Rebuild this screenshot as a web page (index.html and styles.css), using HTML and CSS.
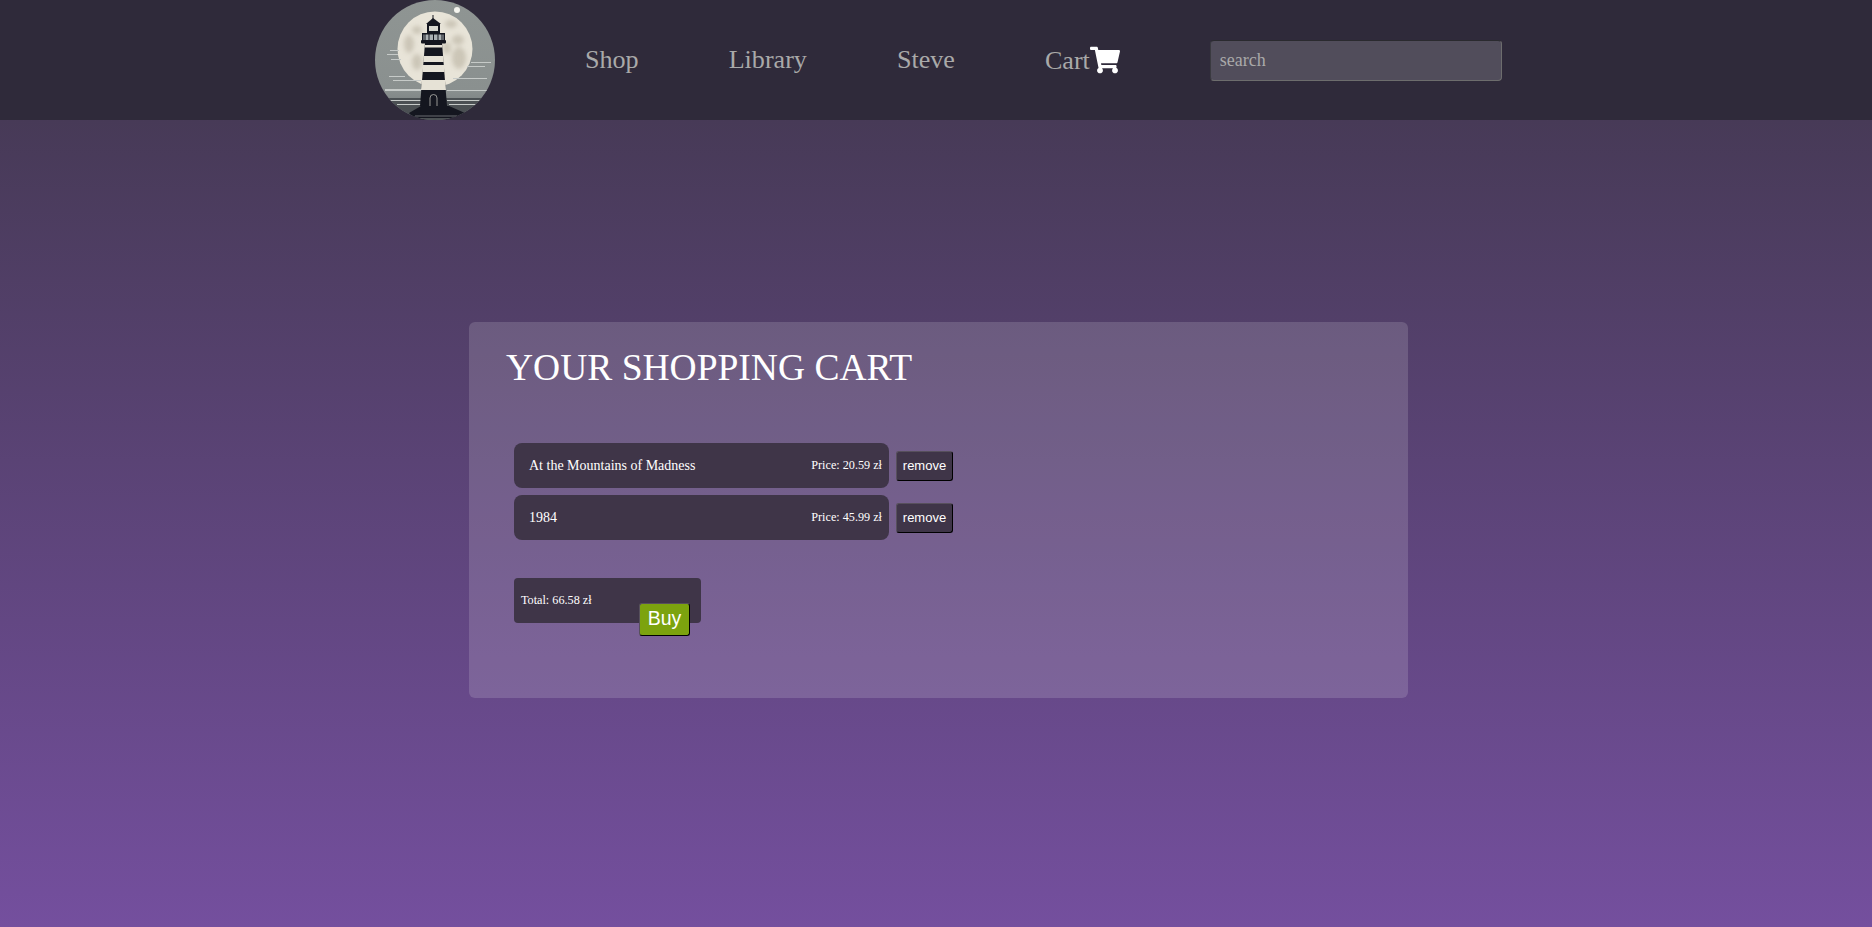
FILE: index.html
```html
<!DOCTYPE html>
<html lang="en">
<head>
<meta charset="utf-8">
<title>Your shopping cart</title>
<link rel="stylesheet" href="styles.css">
</head>
<body>
<header class="topbar">
  <svg class="logo" viewBox="0 0 120 120" aria-label="Lighthouse logo">
    <defs>
      <clipPath id="disc"><circle cx="60" cy="60" r="60"/></clipPath>
      <filter id="soft" x="-40%" y="-40%" width="180%" height="180%"><feGaussianBlur stdDeviation="2.2"/></filter>
      <filter id="hair" x="-10%" y="-200%" width="120%" height="500%"><feGaussianBlur stdDeviation="0.5"/></filter>
      <linearGradient id="sky" x1="0" y1="0" x2="0" y2="1">
        <stop offset="0" stop-color="#8f9593"/>
        <stop offset="0.75" stop-color="#8a908f"/>
        <stop offset="1" stop-color="#6c7274"/>
      </linearGradient>
    </defs>
    <g clip-path="url(#disc)">
      <rect width="120" height="120" fill="url(#sky)"/>
      <circle cx="60" cy="49" r="37.500" fill="#e8e4d8"/>
      <g fill="#b5ae9d" opacity="0.55" filter="url(#soft)">
        <ellipse cx="34" cy="44" rx="5" ry="9"/>
        <ellipse cx="42" cy="30" rx="5" ry="4"/>
        <ellipse cx="76" cy="24" rx="6" ry="4"/>
        <ellipse cx="83" cy="40" rx="6" ry="5"/>
        <ellipse cx="84" cy="58" rx="7" ry="11"/>
        <ellipse cx="72" cy="48" rx="4" ry="6"/>
        <ellipse cx="42" cy="62" rx="5" ry="8"/>
      </g>
      <circle cx="82" cy="10" r="3" fill="#f4f4ee"/>
      <g fill="#c6cac8" filter="url(#hair)">
        <rect x="15" y="50" width="9" height="1"/>
        <rect x="12" y="54" width="11" height="1"/>
        <rect x="16" y="59" width="10" height="1"/>
        <rect x="96" y="62" width="20" height="1"/>
        <rect x="92" y="66" width="18" height="1"/>
        <rect x="14" y="76" width="16" height="1"/>
        <rect x="18" y="80" width="28" height="1"/>
        <rect x="78" y="78" width="34" height="1"/>
        <rect x="10" y="89" width="36" height="2"/>
        <rect x="72" y="90" width="42" height="1"/>
      </g>
      <rect x="0" y="98" width="120" height="22" fill="#4b5053"/>
      <g fill="#c6cac8" filter="url(#hair)">
        <rect x="14" y="100" width="32" height="1"/>
        <rect x="72" y="100" width="36" height="1"/>
        <rect x="22" y="104" width="24" height="1"/>
        <rect x="74" y="104" width="28" height="1"/>
      </g>
      <path d="M34 113 L46 106 L74 106 L90 113 L84 118 L38 118Z" fill="#14161f"/>
      <path d="M40 116H82" stroke="#8f9496" stroke-width="0.7"/>
      <path d="M50 43 L67 43 L72 106 L45 106Z" fill="#14161f"/>
      <path d="M49.800 45 L67.200 45 L67.400 47.500 L49.600 47.500Z M48.800 56 L68.200 56 L68.700 62 L48.300 62Z M48 65 L69 65 L69.600 72 L47.400 72Z M46.900 80 L70.100 80 L71 90 L46 90Z" fill="#e6e2d6"/>
      <path d="M47 33H70V43H47Z" fill="#14161f"/>
      <path d="M48.500 34.500H68.500V40H48.500Z" fill="#aab0b2"/>
      <path d="M50 33V40M54 33V40M58.500 33V40M63 33V40M67 33V40" stroke="#14161f" stroke-width="1"/>
      <rect x="46" y="40" width="25" height="3.500" rx="1" fill="#14161f"/>
      <rect x="52" y="24" width="13" height="9" fill="#14161f"/>
      <rect x="54" y="26" width="9" height="5" fill="#d8d8d0"/>
      <path d="M51 24 L58 18 L66 24Z" fill="#14161f"/>
      <rect x="57.500" y="15" width="1" height="4" fill="#14161f"/>
      <path d="M55 106V98a3.500 3.500 0 0 1 7 0V106" fill="#14161f" stroke="#b8b8b2" stroke-width="0.8"/>
    </g>
  </svg>
  <nav class="nav">
    <a class="nav-link" href="#">Shop</a>
    <a class="nav-link" href="#">Library</a>
    <a class="nav-link" href="#">Steve</a>
    <a class="nav-link cart-link" href="#">Cart<svg class="cart-icon" viewBox="0 0 576 512"><path fill="#fff" d="M528.12 301.319l47.273-208C578.806 78.301 567.391 64 551.99 64H159.208l-9.166-44.81C147.758 8.021 137.93 0 126.529 0H24C10.745 0 0 10.745 0 24v16c0 13.255 10.745 24 24 24h69.883l70.248 343.435C147.325 417.1 136 435.222 136 456c0 30.928 25.072 56 56 56s56-25.072 56-56c0-15.674-6.447-29.835-16.824-40h209.647C430.447 426.165 424 440.326 424 456c0 30.928 25.072 56 56 56s56-25.072 56-56c0-22.172-12.888-41.332-31.579-50.405l5.517-24.276c3.413-15.018-8.002-29.319-23.403-29.319H218.117l-6.545-32h293.145c11.206 0 20.92-7.754 23.403-18.681z"/></svg></a>
    <input class="search" type="text" placeholder="search">
  </nav>
</header>
<main class="panel">
  <h1 class="title">YOUR SHOPPING CART</h1>
  <ul class="items">
    <li class="row">
      <div class="item"><span class="item-name">At the Mountains of Madness</span><span class="item-price">Price: 20.59 zł</span></div>
      <button class="remove" type="button">remove</button>
    </li>
    <li class="row">
      <div class="item"><span class="item-name">1984</span><span class="item-price">Price: 45.99 zł</span></div>
      <button class="remove" type="button">remove</button>
    </li>
  </ul>
  <div class="total">
    <span class="total-text">Total: 66.58 zł</span>
    <button class="buy" type="button">Buy</button>
  </div>
</main>
</body>
</html>
```

FILE: styles.css
```css
* { box-sizing: border-box; }

html, body { margin: 0; height: 100%; }

body {
  min-height: 927px;
  overflow: hidden;
  font-family: "Liberation Serif", "Times New Roman", serif;
  color: #fff;
  background: linear-gradient(180deg, #473a57 120px, #744f9e 100%);
}

.topbar {
  height: 120px;
  background: #2f2a3a;
  display: flex;
  align-items: center;
  padding-left: 375px;
  gap: 90px;
}

.logo { width: 120px; height: 120px; display: block; flex: none; }

.nav { display: flex; align-items: center; gap: 90px; }

.nav-link {
  font-size: 26.100px;
  line-height: 30px;
  color: #a9a9a9;
  text-decoration: none;
}

.cart-link { display: flex; align-items: center; margin-top: 2px; }

.cart-icon { width: 30px; height: 28px; margin-top: -3px; }

.search {
  width: 292px;
  height: 41px;
  padding: 0 9px;
  font: 18px "Liberation Serif", serif;
  color: #fff;
  background: #514d5b;
  border: 1px solid;
  border-color: #2a2a2f #6d6d6d #6d6d6d #3a3a40;
  border-radius: 4px;
  outline: none;
}

.search::placeholder { color: #a9a9a9; opacity: 1; }

.panel {
  width: 939px;
  height: 376px;
  margin: 202px 0 0 469px;
  padding: 25px 37px;
  background: rgba(255, 255, 255, 0.15);
  border-radius: 6px;
}

.title {
  margin: 0;
  font-size: 37.500px;
  font-weight: 400;
  line-height: 42px;
}

.items {
  list-style: none;
  margin: 54px 0 0 8px;
  padding: 0;
  display: flex;
  flex-direction: column;
  gap: 7px;
}

.row { display: flex; align-items: center; gap: 7px; }

.item {
  width: 375px;
  height: 45px;
  display: flex;
  align-items: center;
  justify-content: space-between;
  padding: 0 7px 0 15px;
  background: #3f3548;
  border-radius: 8px;
}

.item-name { font-size: 14px; }

.item-price { font-size: 12.200px; }

.remove {
  width: 57px;
  height: 30px;
  padding: 0;
  font: 13px "Liberation Sans", Arial, sans-serif;
  color: #fff;
  background: #3f3548;
  border: 1px solid;
  border-color: #57505c #000 #000 #57505c;
  border-radius: 3px;
}

.total {
  position: relative;
  width: 187px;
  height: 45px;
  margin: 38px 0 0 8px;
  padding-left: 7px;
  display: flex;
  align-items: center;
  background: #3f3548;
  border-radius: 4px;
}

.total-text { font-size: 12.200px; }

.buy {
  position: absolute;
  left: 125px;
  top: 25px;
  width: 51px;
  height: 33px;
  padding: 0 0 2px;
  font: 19.500px "Liberation Sans", Arial, sans-serif;
  color: #fff;
  background: #7ca30e;
  border: 1px solid;
  border-color: #57505c #000 #000 #57505c;
  border-radius: 3px;
}
```
